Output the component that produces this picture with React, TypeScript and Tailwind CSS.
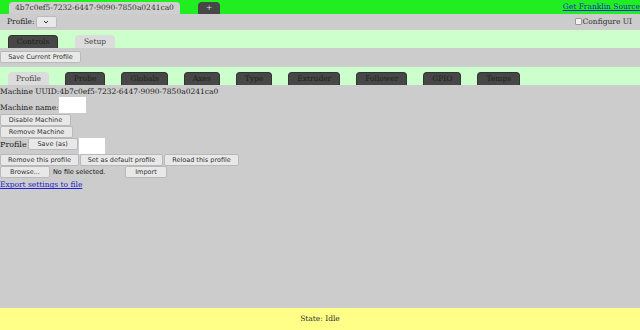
import React from 'react';

const SETUP_TABS = ['Profile', 'Probe', 'Globals', 'Axes', 'Type', 'Extruder', 'Follower', 'GPIO', 'Temps'];

const serif = "font-['DejaVu_Serif',serif]";

function Btn({ children, className = '' }: { children: React.ReactNode; className?: string }) {
  return (
    <button
      className={`h-[12px] px-[6px] rounded-[2px] border border-[#b9b9b9] bg-[#e8e8e8] text-[6.5px] leading-none whitespace-nowrap text-[#333] font-['DejaVu_Sans',sans-serif] shrink-0 ${className}`}
    >
      {children}
    </button>
  );
}

function Tab({ label, active, className = '' }: { label: string; active?: boolean; className?: string }) {
  return (
    <div
      className={`h-[13px] px-[8px] rounded-t-[4px] flex items-center justify-center text-[7.5px] ${
        active ? 'bg-[#dcdcdc] text-[#444]' : 'bg-[#474747] text-[#222] border border-b-0 border-[#333]'
      } ${className}`}
    >
      {label}
    </div>
  );
}

export default function App() {
  return (
    <div className={`w-[640px] h-[330px] flex flex-col bg-[#cccccc] text-[#222] leading-none ${serif} overflow-hidden`}>
      {/* top bar */}
      <div className="h-[14px] bg-[#20ee20] flex items-end pl-[9px] shrink-0">
        <div className="w-[171px] h-[12px] bg-[#cfcfcf] rounded-t-[4px] flex items-center justify-center text-[7.5px] text-[#333]">
          4b7c0ef5-7232-6447-9090-7850a0241ca0
        </div>
        <div className="ml-[18px] w-[22px] h-[12px] bg-[#474747] rounded-t-[4px] flex items-center justify-center text-[8px] text-[#ddd]">
          +
        </div>
        <a className="ml-auto self-center text-[7.5px] text-[#2222cc] underline">Get Franklin Source</a>
      </div>

      {/* profile row */}
      <div className="h-[15px] flex items-center pl-[7px] pr-[8px] shrink-0 text-[7.5px]">
        <span>Profile:</span>
        <div className="ml-[1px] w-[21px] h-[12px] rounded-[2px] border border-[#bbb] bg-[#e8e8e8] flex items-center justify-center">
          <svg width="6" height="4" viewBox="0 0 6 4">
            <path d="M1 1 L3 3 L5 1" stroke="#333" strokeWidth="1" fill="none" />
          </svg>
        </div>
        <label className="ml-auto flex items-center gap-[1px] text-[7.5px] text-[#333]">
          <span className="w-[7px] h-[7px] bg-[#f2f2f2] border border-[#999] rounded-[1px]" />
          Configure UI
        </label>
      </div>

      {/* main tabs */}
      <div className="mt-[1px] h-[18px] bg-[#ccffcc] flex items-end pl-[8px] gap-[17px] shrink-0">
        <Tab label="Controls" className="w-[50px]" />
        <Tab label="Setup" active className="w-[40px]" />
      </div>

      <div className="pt-[3px] flex">
        <Btn className="w-[81px]">Save Current Profile</Btn>
      </div>

      {/* setup tabs */}
      <div className="mt-[4px] h-[18px] bg-[#ccffcc] flex items-end pl-[8px] gap-[16px] shrink-0">
        {SETUP_TABS.map((t, i) => (
          <Tab key={t} label={t} active={i === 0} />
        ))}
      </div>

      <div className="flex flex-col items-start text-[7.5px] pt-[2px]">
        <div className="h-[10px] flex items-center">Machine UUID:4b7c0ef5-7232-6447-9090-7850a0241ca0</div>
        <div className="flex items-end h-[16px]">
          <span className="h-[10px] flex items-center">Machine name:</span>
          <div className="w-[27px] h-[16px] bg-white" />
        </div>
        <Btn className="mt-[1px] w-[71px]">Disable Machine</Btn>
        <Btn className="w-[73px]">Remove Machine</Btn>
        <div className="flex items-start">
          <span className="text-[8px] h-[14px] flex items-center">Profile</span>
          <Btn className="ml-[1px] w-[50px]">Save (as)</Btn>
          <div className="ml-[1px] w-[26px] h-[16px] bg-white" />
        </div>
        <div className="flex">
          <Btn className="w-[79px]">Remove this profile</Btn>
          <Btn className="ml-[1px] w-[83px]">Set as default profile</Btn>
          <Btn className="ml-[1px] w-[75px]">Reload this profile</Btn>
        </div>
        <div className="flex items-center">
          <Btn className="w-[50px]">Browse...</Btn>
          <span className="ml-[3px] w-[72px] text-[6.5px] text-[#111] font-['DejaVu_Sans',sans-serif]">No file selected.</span>
          <Btn className="w-[42px]">Import</Btn>
        </div>
        <a className="mt-[2px] h-[10px] flex items-center text-[#2222cc] underline">Export settings to file</a>
      </div>

      <div className="flex-1" />

      <div className="h-[22px] bg-[#ffff88] flex items-center justify-center text-[7.5px] text-[#333] shrink-0">
        State: Idle
      </div>
    </div>
  );
}
